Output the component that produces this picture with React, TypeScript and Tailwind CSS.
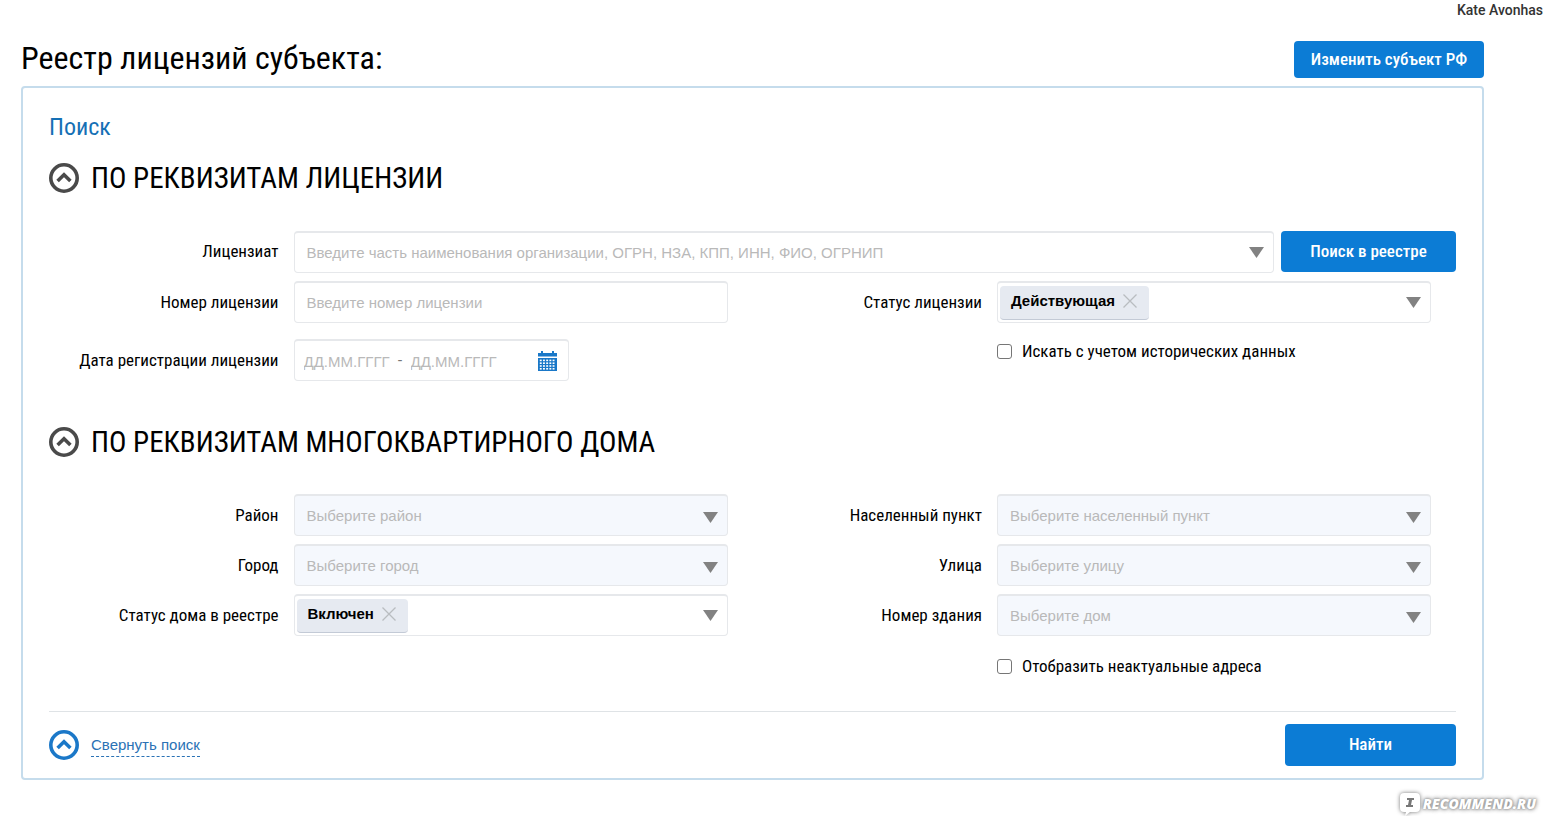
import React, { useState } from "react";
import clsx from "clsx";

const condensed =
  "font-['Roboto_Condensed','Liberation_Sans_Narrow',Roboto,sans-serif]";
const fieldBox =
  "h-[42px] rounded border border-t-2 border-[#e6e8eb] text-[15px]";

const Triangle: React.FC = () => (
  <svg width="15" height="11" viewBox="0 0 15 11" aria-hidden="true">
    <path d="M0 0h15L7.5 11z" fill="#828282" />
  </svg>
);

const CircleUp: React.FC<{ color: string }> = ({ color }) => (
  <svg
    className="shrink-0"
    width="30"
    height="30"
    viewBox="0 0 30 30"
    fill="none"
    stroke={color}
    aria-hidden="true"
  >
    <circle cx="15" cy="15" r="13.2" strokeWidth="3.6" />
    <path d="M8.6 18 15 11.8l6.4 6.2" strokeWidth="3.6" />
  </svg>
);

const CalendarIcon: React.FC = () => (
  <svg width="19" height="20" viewBox="0 0 19 20" aria-hidden="true">
    <path d="M0 2h3V0h2v2h9V0h2v2h3v3.5H0zM0 7h19v13H0z" fill="#1a78c8" />
    <g fill="#fff">
      {[8.6, 11.4, 14.2, 17].map((y) =>
        [1.8, 5, 8.2, 11.4, 14.6].map((x) => (
          <rect key={`${x}-${y}`} x={x} y={y} width="1.9" height="1.6" />
        )),
      )}
    </g>
  </svg>
);

interface FieldProps {
  id: string;
  label: string;
  children: React.ReactNode;
}

const Field: React.FC<FieldProps> = ({ id, label, children }) => (
  <div className="flex items-center">
    <label
      htmlFor={id}
      className={clsx(condensed, "w-1/3 pr-[5px] text-right text-[17px] leading-6")}
    >
      {label}
    </label>
    <div className="w-2/3 pr-[25px] pl-[10px]">{children}</div>
  </div>
);

const SelectField: React.FC<{ id: string; placeholder: string }> = ({
  id,
  placeholder,
}) => (
  <div className="relative">
    <select
      id={id}
      defaultValue=""
      className={clsx(
        fieldBox,
        "w-full appearance-none bg-[#f5f8fd] px-3 pt-[2px] text-[#b9b9b9]",
      )}
    >
      <option value="">{placeholder}</option>
    </select>
    <span className="pointer-events-none absolute inset-y-0 right-[10px] flex items-center pt-1">
      <Triangle />
    </span>
  </div>
);

const TagSelect: React.FC<{ id: string; tag: string }> = ({ id, tag }) => {
  const [selected, setSelected] = useState<boolean>(true);

  return (
    <div className={clsx(fieldBox, "relative flex items-center bg-white px-[2px]")}>
      {selected && (
        <span className="flex h-[34px] items-center gap-2 rounded border-b border-[#c3cad6] bg-[#e6eaf1] pr-3 pb-[2px] pl-[11px] font-bold">
          {tag}
          <button
            type="button"
            aria-label={`Удалить: ${tag}`}
            onClick={() => setSelected(false)}
          >
            <svg width="14" height="14" viewBox="0 0 14 14" stroke="#b9bcc0" aria-hidden="true">
              <path d="m.5.5 13 13m0-13-13 13" strokeWidth="1.3" />
            </svg>
          </button>
        </span>
      )}
      <select id={id} defaultValue="" className="h-full flex-1 appearance-none">
        <option value=""></option>
        <option value={tag}>{tag}</option>
      </select>
      <span className="pointer-events-none absolute inset-y-0 right-[9px] flex items-center">
        <Triangle />
      </span>
    </div>
  );
};

const CheckField: React.FC<{ id: string; label: string }> = ({ id, label }) => (
  <div className="flex items-center gap-[10px] pl-[calc(33.333%+10px)]">
    <input
      id={id}
      type="checkbox"
      className="size-[15px] shrink-0 appearance-none rounded-[3px] border border-[#767676] bg-white checked:bg-[#0c7cd5]"
    />
    <label htmlFor={id} className={clsx(condensed, "text-[17px] leading-6")}>
      {label}
    </label>
  </div>
);

const SectionTitle: React.FC<{ children: React.ReactNode }> = ({ children }) => (
  <h3 className={clsx(condensed, "text-[29px] leading-[30px]")}>
    <button type="button" className="flex items-center gap-3">
      <CircleUp color="#4a4a4a" />
      {children}
    </button>
  </h3>
);

const PrimaryButton: React.FC<{ className: string; children: React.ReactNode }> = ({
  className,
  children,
}) => (
  <button
    type="button"
    className={clsx(
      condensed,
      "shrink-0 rounded bg-[#0c7cd5] text-[17px] font-medium text-white",
      className,
    )}
  >
    {children}
  </button>
);

const App: React.FC = () => (
  <div className="bg-white font-['Liberation_Sans',Arial,sans-serif] text-black">
    <div className="h-[41px] pr-1 text-right font-[Roboto,sans-serif] text-[14px] leading-5 font-medium text-[#333]">
      Kate Avonhas
    </div>

    <main className="pr-[63px] pl-[21px]">
      <div className="mb-2 flex items-start justify-between">
        <h1 className={clsx(condensed, "text-[32px] leading-[34px]")}>
          Реестр лицензий субъекта:
        </h1>
        <PrimaryButton className="h-[37px] w-[190px]">
          Изменить субъект РФ
        </PrimaryButton>
      </div>

      <form className="rounded border-2 border-[#c5dcec] px-[26px] pt-6 pb-3">
        <h2 className={clsx(condensed, "mb-[21px] text-[24px] leading-[30px] text-[#1570b5]")}>
          Поиск
        </h2>

        <SectionTitle>ПО РЕКВИЗИТАМ ЛИЦЕНЗИИ</SectionTitle>
        <div className="mt-[38px] mb-2 flex items-start">
          <label
            htmlFor="licensee"
            className={clsx(condensed, "w-1/6 pr-[5px] text-right text-[17px] leading-10")}
          >
            Лицензиат
          </label>
          <div className="relative mr-[7px] ml-[10px] flex-1">
            <input
              id="licensee"
              type="text"
              placeholder="Введите часть наименования организации, ОГРН, НЗА, КПП, ИНН, ФИО, ОГРНИП"
              className={clsx(fieldBox, "w-full bg-white px-3 placeholder:text-[#b9b9b9]")}
            />
            <button
              type="button"
              aria-label="Показать список"
              className="absolute inset-y-0 right-[10px] flex items-center"
            >
              <Triangle />
            </button>
          </div>
          <PrimaryButton className="h-[41px] w-[175px]">Поиск в реестре</PrimaryButton>
        </div>

        <div className="grid grid-cols-2">
          <div className="flex flex-col gap-4">
            <Field id="number" label="Номер лицензии">
              <input
                id="number"
                type="text"
                placeholder="Введите номер лицензии"
                className={clsx(fieldBox, "w-full bg-white px-3 placeholder:text-[#b9b9b9]")}
              />
            </Field>
            <Field id="date-from" label="Дата регистрации лицензии">
              <div
                className={clsx(
                  fieldBox,
                  "flex w-[275px] items-center bg-white px-[9px] text-[#777]",
                )}
              >
                <input
                  id="date-from"
                  type="text"
                  placeholder="ДД.ММ.ГГГГ"
                  className="w-[94px] pt-1 placeholder:text-[#b9b9b9]"
                />
                -
                <input
                  type="text"
                  aria-label="Дата по"
                  placeholder="ДД.ММ.ГГГГ"
                  className="ml-2 w-[94px] pt-1 placeholder:text-[#b9b9b9]"
                />
                <button type="button" aria-label="Календарь" className="mr-[2px] ml-auto">
                  <CalendarIcon />
                </button>
              </div>
            </Field>
          </div>
          <div className="flex flex-col gap-4">
            <Field id="status" label="Статус лицензии">
              <TagSelect id="status" tag="Действующая" />
            </Field>
            <CheckField id="history" label="Искать с учетом исторических данных" />
          </div>
        </div>

        <div className="mt-[46px] mb-[37px]">
          <SectionTitle>ПО РЕКВИЗИТАМ МНОГОКВАРТИРНОГО ДОМА</SectionTitle>
        </div>
        <div className="grid grid-cols-2">
          <div className="flex flex-col gap-2">
            <Field id="district" label="Район">
              <SelectField id="district" placeholder="Выберите район" />
            </Field>
            <Field id="city" label="Город">
              <SelectField id="city" placeholder="Выберите город" />
            </Field>
            <Field id="house-status" label="Статус дома в реестре">
              <TagSelect id="house-status" tag="Включен" />
            </Field>
          </div>
          <div className="flex flex-col gap-2">
            <Field id="town" label="Населенный пункт">
              <SelectField id="town" placeholder="Выберите населенный пункт" />
            </Field>
            <Field id="street" label="Улица">
              <SelectField id="street" placeholder="Выберите улицу" />
            </Field>
            <Field id="building" label="Номер здания">
              <SelectField id="building" placeholder="Выберите дом" />
            </Field>
            <div className="mt-[10px]">
              <CheckField id="inactive" label="Отобразить неактуальные адреса" />
            </div>
          </div>
        </div>

        <div className="mt-[33px] flex items-center justify-between border-t border-[#dfe3e6] pt-3">
          <a href="#search" className="flex items-center gap-3 text-[15px] text-[#2a72b5]">
            <CircleUp color="#1b78c8" />
            <span className="border-b border-dashed border-[#2a72b5] leading-[23px]">
              Свернуть поиск
            </span>
          </a>
          <PrimaryButton className="h-[42px] w-[171px]">Найти</PrimaryButton>
        </div>
      </form>
    </main>

    <footer className="flex items-center justify-end gap-[2px] pt-3 pr-[11px] font-['Open_Sans',sans-serif] text-[14px] leading-6 font-extrabold text-white italic">
      <svg
        className="drop-shadow-[0_0_2px_#777]"
        width="22"
        height="24"
        viewBox="0 0 22 24"
        aria-hidden="true"
      >
        <path d="M5 1h12q4 0 4 4v11q0 4-4 4h-6l-5 4 1-4H5q-4 0-4-4V5q0-4 4-4z" fill="#fff" />
        <path d="M8 6h7v2h-2l-1 5h2v2H7v-2h2l1-5H8z" fill="#777" />
      </svg>
      <span className="[text-shadow:0_0_2px_#888,0_0_4px_#999,0_0_5px_#aaa]">
        RECOMMEND.RU
      </span>
    </footer>
  </div>
);

export default App;
